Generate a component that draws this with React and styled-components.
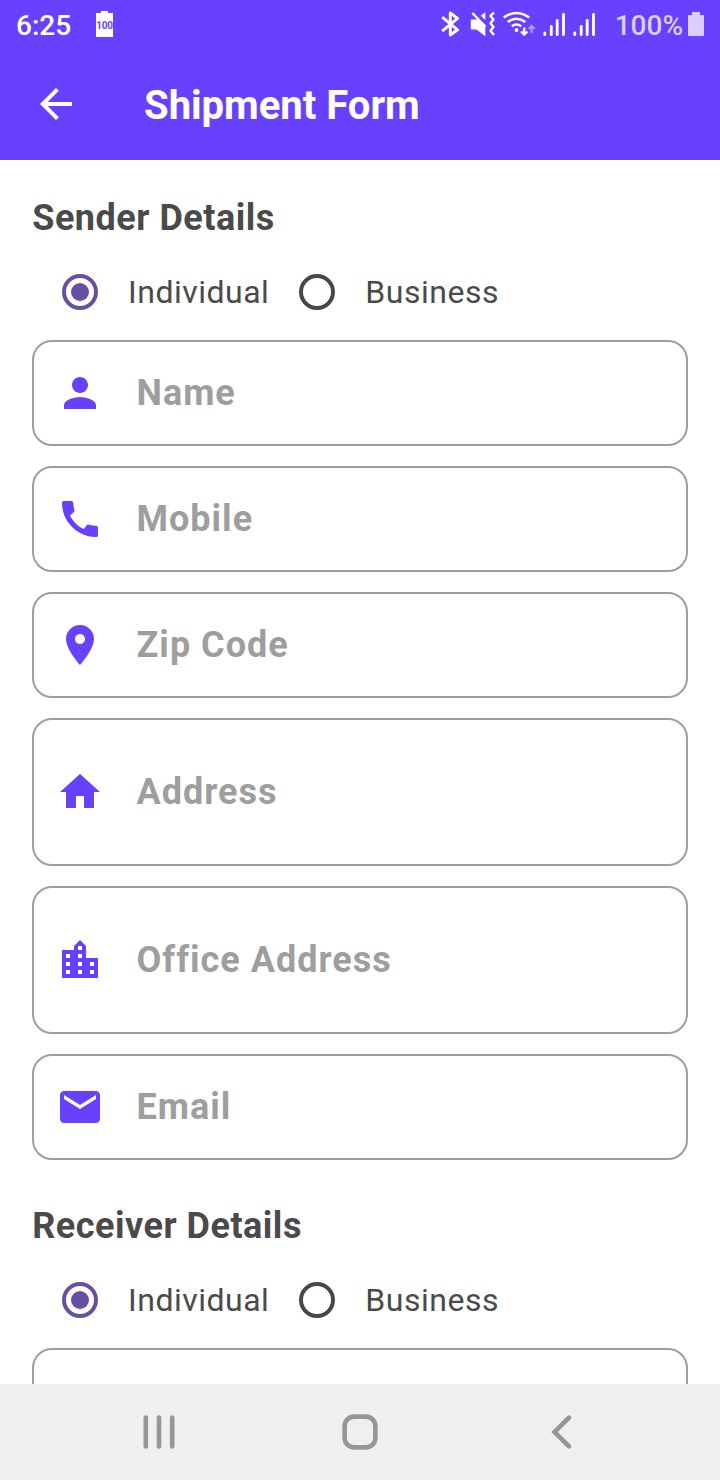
import React from "react";
import styled, { createGlobalStyle } from "styled-components";

const GlobalStyle = createGlobalStyle`
  *, *::before, *::after { box-sizing: border-box; }
  body {
    margin: 0;
    background: #ffffff;
    font-family: Roboto, "Liberation Sans", sans-serif;
  }
`;

const violet = "#6840ff";

const Screen = styled.div`
  width: 720px;
  height: 1480px;
  display: flex;
  flex-direction: column;
  overflow: hidden;
  background: #ffffff;
`;

const Header = styled.header`
  flex: none;
  height: 160px;
  background: ${violet};
  color: #ffffff;
`;

const StatusBar = styled.div`
  height: 48px;
  padding: 0 16px;
  display: flex;
  align-items: center;
  justify-content: space-between;
`;

const StatusGroup = styled.div`
  display: flex;
  align-items: center;
`;

const Clock = styled.span`
  width: 80px;
  margin-top: 3px;
  font-size: 28px;
  line-height: 46px;
  font-weight: 500;
`;

const BatteryPercent = styled.span`
  margin: 3px 5px 0 19px;
  font-size: 28px;
  line-height: 46px;
  font-weight: 500;
  color: #d9cfff;
`;

const BatteryBadge = styled.span`
  display: flex;
  flex-direction: column;
  align-items: center;
  width: 17px;
  height: 26px;
  color: ${violet};
  font-size: 10px;
  font-weight: 700;
  letter-spacing: -0.3px;

  &::before {
    content: "";
    width: 7px;
    height: 2px;
    background: #ffffff;
  }
`;

const BadgeBody = styled.span`
  display: flex;
  justify-content: center;
  width: 17px;
  height: 24px;
  line-height: 25px;
  background: #ffffff;
`;

const Drawing = styled.svg`
  display: block;
  flex: none;
`;

const AppBar = styled.div`
  height: 112px;
  padding-left: 32px;
  display: flex;
  align-items: center;
`;

const Title = styled.h1`
  margin: 3px 0 0 64px;
  font-size: 40px;
  line-height: 48px;
  font-weight: 700;
`;

const Content = styled.main`
  flex: 1;
  min-height: 0;
  overflow: hidden;
  padding: 34px 32px 0;
  display: flex;
  flex-direction: column;
  gap: 42px;
`;

const Section = styled.section`
  flex: none;
`;

const SectionTitle = styled.h2`
  margin: 0;
  padding-left: 0.25px;
  font-size: 36px;
  line-height: 48px;
  font-weight: 700;
  letter-spacing: 0.5px;
  color: #4a4a4a;
`;

const RadioGroup = styled.div`
  display: flex;
  height: 98px;
  padding-top: 2px;
`;

const RadioOption = styled.label`
  display: flex;
  align-items: center;
  font-size: 32px;
  line-height: 48px;
  letter-spacing: 0.5px;
  color: #4a4a4a;
`;

const RadioMark = styled.span`
  width: 36px;
  height: 36px;
  margin: 0 30px;
  display: flex;
  align-items: center;
  justify-content: center;
  border: 4px solid ${(p) => (p.$on ? "#6750a4" : "#49454f")};
  border-radius: 50%;

  &::after {
    content: "";
    width: 18px;
    height: 18px;
    border-radius: 50%;
    background: ${(p) => (p.$on ? "#6750a4" : "transparent")};
  }
`;

const FieldList = styled.div`
  display: flex;
  flex-direction: column;
  gap: 20px;
`;

const Field = styled.div`
  display: flex;
  align-items: center;
  gap: 32.5px;
  height: ${(p) => (p.$tall ? 148 : 106)}px;
  padding: 0 22px;
  border: 2px solid #9e9e9e;
  border-radius: 20px;
`;

const FieldLabel = styled.span`
  font-size: 36px;
  line-height: 48px;
  font-weight: 700;
  letter-spacing: 1px;
  color: #9e9e9e;
`;

const NavBar = styled.nav`
  flex: none;
  height: 96px;
  padding: 0 134px;
  display: flex;
  align-items: center;
  justify-content: space-between;
  background: #efefef;
`;

const paths = {
  person:
    "M12 12c2.21 0 4-1.79 4-4s-1.79-4-4-4-4 1.79-4 4 1.79 4 4 4zm0 2c-2.67 0-8 1.34-8 4v2h16v-2c0-2.66-5.33-4-8-4z",
  call:
    "M20.01 15.38c-1.23 0-2.42-.2-3.53-.56-.35-.12-.74-.03-1.01.24l-1.57 1.97c-2.83-1.35-5.48-3.9-6.89-6.83l1.95-1.66c.27-.28.35-.67.24-1.02-.37-1.11-.56-2.3-.56-3.53 0-.54-.45-.99-.99-.99H4.19C3.65 3 3 3.24 3 3.99 3 13.28 10.73 21 20.01 21c.71 0 .99-.63.99-1.18v-3.45c0-.54-.45-.99-.99-.99z",
  place:
    "M12 2C8.13 2 5 5.13 5 9c0 5.25 7 13 7 13s7-7.75 7-13c0-3.87-3.13-7-7-7zm0 9.5c-1.38 0-2.5-1.12-2.5-2.5s1.12-2.5 2.5-2.5 2.5 1.12 2.5 2.5-1.12 2.5-2.5 2.5z",
  home: "M10 20v-6h4v6h5v-8h3L12 3 2 12h3v8z",
  city:
    "M15 11V5l-3-3-3 3v2H3v14h18V11h-6zm-8 8H5v-2h2v2zm0-4H5v-2h2v2zm0-4H5V9h2v2zm6 8h-2v-2h2v2zm0-4h-2v-2h2v2zm0-4h-2V9h2v2zm0-4h-2V5h2v2zm6 12h-2v-2h2v2zm0-4h-2v-2h2v2z",
  mail:
    "M20 4H4c-1.1 0-1.99.9-1.99 2L2 18c0 1.1.9 2 2 2h16c1.1 0 2-.9 2-2V6c0-1.1-.9-2-2-2zm0 4l-8 5-8-5V6l8 5 8-5v2z",
  back: "M20 11H7.83l5.59-5.59L12 4l-8 8 8 8 1.41-1.41L7.83 13H20v-2z",
};

function Icon({ name, color = violet }) {
  return (
    <Drawing width="48" height="48" viewBox="0 0 24 24" fill={color}>
      <path d={paths[name]} />
    </Drawing>
  );
}

function ConnectivityIcons() {
  return (
    <Drawing width="156" height="28" viewBox="440 10 156 28" fill="none" stroke="#fff">
      <path d="M442.2 17.2 457.6 29.8 450.3 35V13L457.6 18.3 442.2 31.2" strokeWidth="2.9" strokeLinejoin="round" />
      <path d="M470.8 19.500h8l6.500 6.500v10.300l-8.800-6.800h-5.700z" fill="#fff" stroke="none" />
      <path d="M480.800 15.800 485.300 12.300v7.700z" fill="#fff" stroke="none" />
      <path d="m472.300 13 13 13.500" strokeWidth="2.400" />
      <path d="m494 12.500-3.500 3.400 3 3.600-3 3.800 3 3.700-3 3.700 3.500 4.300" strokeWidth="2.400" strokeLinejoin="round" />
      <path d="M503.800 17.500q12.700-9.200 25.400 0M507.700 22q8.800-6.600 17.600 0M511.800 26.200q4.700-3.500 9.400 0" strokeWidth="2.400" />
      <circle cx="516.500" cy="30" r="1.900" fill="#fff" stroke="none" />
      <path d="M524.200 27.500v7M521 31.500l3.200 3.100 3.200-3.100" strokeWidth="2.200" />
      <path d="M531.600 33v-6M528.800 28.800l2.800-2.800 2.800 2.800" strokeWidth="2" opacity=".5" />
      <g strokeWidth="2.800" strokeLinecap="round">
        <path d="M544.800 32.800v1.900M551.300 26.500v8.200M557.200 20.500v14.200M563.500 14.500v20.200" />
        <path d="M574.800 32.800v1.900M581.200 26.500v8.200M587.200 20.500v14.200M593.500 14.500v20.200" />
      </g>
    </Drawing>
  );
}

function BatteryIcon() {
  return (
    <Drawing width="16" height="24" viewBox="0 0 16 24" fill="#d9cfff">
      <path d="M4 0h8v3h3q1 0 1 1v19q0 1-1 1H1q-1 0-1-1V4q0-1 1-1h3z" />
    </Drawing>
  );
}

function PartyChoice() {
  return (
    <RadioGroup>
      <RadioOption>
        <RadioMark $on />
        Individual
      </RadioOption>
      <RadioOption>
        <RadioMark />
        Business
      </RadioOption>
    </RadioGroup>
  );
}

const senderFields = [
  { icon: "person", label: "Name" },
  { icon: "call", label: "Mobile" },
  { icon: "place", label: "Zip Code" },
  { icon: "home", label: "Address", tall: true },
  { icon: "city", label: "Office Address", tall: true },
  { icon: "mail", label: "Email" },
];

export default function App() {
  return (
    <>
      <GlobalStyle />
      <Screen>
        <Header>
          <StatusBar>
            <StatusGroup>
              <Clock>6:25</Clock>
              <BatteryBadge>
                <BadgeBody>100</BadgeBody>
              </BatteryBadge>
            </StatusGroup>
            <StatusGroup>
              <ConnectivityIcons />
              <BatteryPercent>100%</BatteryPercent>
              <BatteryIcon />
            </StatusGroup>
          </StatusBar>
          <AppBar>
            <Icon name="back" color="#fff" />
            <Title>Shipment Form</Title>
          </AppBar>
        </Header>
        <Content>
          <Section>
            <SectionTitle>Sender Details</SectionTitle>
            <PartyChoice />
            <FieldList>
              {senderFields.map((f) => (
                <Field key={f.label} $tall={f.tall}>
                  <Icon name={f.icon} />
                  <FieldLabel>{f.label}</FieldLabel>
                </Field>
              ))}
            </FieldList>
          </Section>
          <Section>
            <SectionTitle>Receiver Details</SectionTitle>
            <PartyChoice />
            <FieldList>
              <Field />
            </FieldList>
          </Section>
        </Content>
        <NavBar>
          <Drawing width="48" height="48" viewBox="134 1408 48 48" fill="none" stroke="#969696" strokeWidth="4.600" strokeLinecap="round">
            <path d="M145.800 1417.500v29M159 1417.500v29M172.200 1417.500v29" />
          </Drawing>
          <Drawing width="48" height="48" viewBox="336 1408 48 48" fill="none" stroke="#969696" strokeWidth="4.600">
            <rect x="344.600" y="1416.600" width="30.800" height="30.800" rx="9.500" />
          </Drawing>
          <Drawing width="48" height="48" viewBox="538.500 1408 48 48" fill="none" stroke="#969696" strokeWidth="4.600" strokeLinecap="round">
            <path d="m569.500 1417.600-14.500 14.400 14.500 14.400" />
          </Drawing>
        </NavBar>
      </Screen>
    </>
  );
}
